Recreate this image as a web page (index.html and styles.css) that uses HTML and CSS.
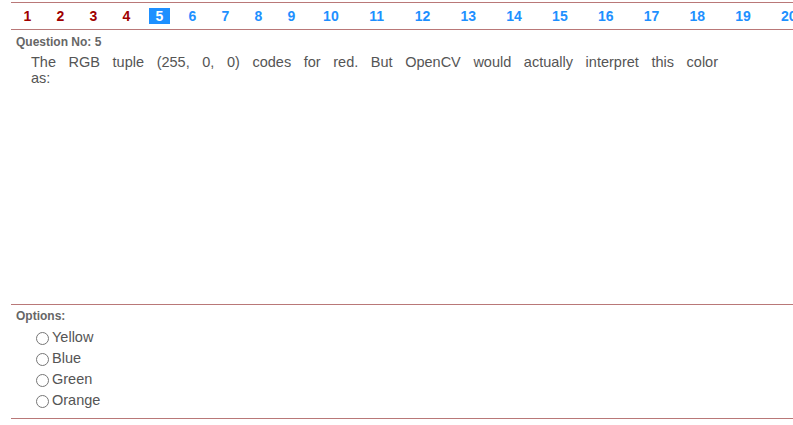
FILE: index.html
```html
<!DOCTYPE html>
<html>
<head>
<meta charset="utf-8">
<link rel="stylesheet" href="styles.css">
</head>
<body>
<div class="wrap">
  <nav class="qnav">
    <a class="n done">1</a><a class="n done">2</a><a class="n done">3</a><a class="n done">4</a><a class="n"><span class="cur">5</span></a><a class="n">6</a><a class="n">7</a><a class="n">8</a><a class="n">9</a><a class="n w">10</a><a class="n w">11</a><a class="n w">12</a><a class="n w">13</a><a class="n w">14</a><a class="n w">15</a><a class="n w">16</a><a class="n w">17</a><a class="n w">18</a><a class="n w">19</a><a class="n w">20</a>
  </nav>
  <section class="question">
    <div class="label">Question No: 5</div>
    <p class="qtext"><span class="jline">The RGB tuple (255, 0, 0) codes for red. But OpenCV would actually interpret this color</span>as:</p>
  </section>
  <section class="options">
    <div class="label">Options:</div>
    <label class="opt"><input type="radio" name="o">Yellow</label>
    <label class="opt"><input type="radio" name="o">Blue</label>
    <label class="opt"><input type="radio" name="o">Green</label>
    <label class="opt"><input type="radio" name="o">Orange</label>
  </section>
</div>
</body>
</html>
```

FILE: styles.css
```css
html, body {
  margin: 0;
  padding: 0;
  background: #fff;
  overflow: hidden;
}
body {
  font-family: "Liberation Sans", Arial, sans-serif;
}
.wrap {
  margin-left: 11px;
  padding-top: 2px;
}
.qnav {
  display: flex;
  white-space: nowrap;
  overflow: hidden;
  border-top: 1px solid #b97878;
  border-bottom: 1px solid #b97878;
  height: 26px;
  align-items: center;
}
.n {
  flex: 0 0 33px;
  text-align: center;
  font-size: 14px;
  font-weight: bold;
  line-height: 16px;
  color: #1e90ff;
}
.n.w { flex-basis: 45.8px; }
.n.done { color: #a00000; }
.cur {
  display: inline-block;
  width: 21px;
  background: #1e90ff;
  color: #fff;
  line-height: 16px;
}
.question {
  height: 274px;
  padding-top: 5px;
  box-sizing: border-box;
}
.label {
  padding-left: 5px;
  font-size: 12px;
  font-weight: bold;
  color: #666;
  line-height: 14px;
}
.qtext {
  margin: 5px 0 0 20px;
  width: 687px;
  font-size: 14.5px;
  line-height: 16px;
  color: #555;
}
.jline {
  display: block;
  text-align: justify;
  text-align-last: justify;
}
.options {
  border-top: 1px solid #b97878;
  border-bottom: 1px solid #b97878;
  padding: 4px 0 8px;
}
.options .label {
  margin-bottom: 3px;
}
.opt {
  display: flex;
  align-items: center;
  height: 21px;
  padding-left: 20px;
  font-size: 14.5px;
  color: #555;
}
.opt input {
  margin: 3px 3px 0 5px;
  width: 13px;
  height: 13px;
}
```
